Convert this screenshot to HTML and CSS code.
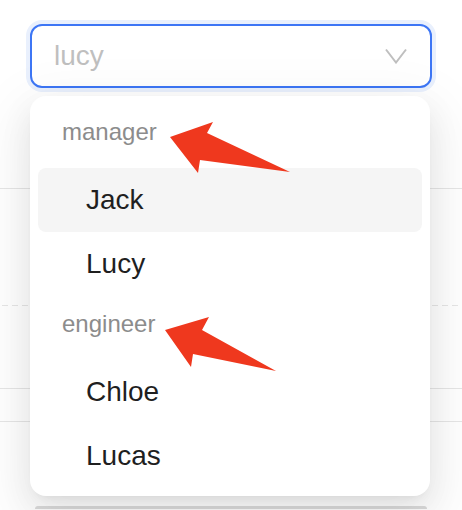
FILE: index.html
```html
<!DOCTYPE html>
<html>
<head>
    <title>Select with option groups</title>
    <link rel="stylesheet" href="styles.css">
</head>
<body>
    <div class="page">
        <div class="select">
            <span class="placeholder">lucy</span>
            <svg class="chevron" width="22" height="16" viewBox="0 0 22 16">
                <polyline points="1,1.5 11,14.5 21,1.5" fill="none" stroke="#bfbfbf" stroke-width="2" stroke-linejoin="miter"/>
            </svg>
        </div>

        <!-- content underneath the popup -->
        <div class="rows">
            <div class="row row-1"></div>
            <div class="row row-2"></div>
            <div class="row row-3"></div>
            <div class="row row-4"></div>
        </div>
        <div class="bottom-block"></div>

        <div class="dropdown">
            <div class="group-title">manager</div>
            <div class="option active">Jack</div>
            <div class="option">Lucy</div>
            <div class="group-title">engineer</div>
            <div class="option">Chloe</div>
            <div class="option">Lucas</div>
        </div>

        <!-- annotation arrows -->
        <svg class="arrows" width="462" height="510" viewBox="0 0 462 510">
            <polygon points="170,137 213,122 207,133 290,172 200,160 198,173" fill="#ef381e"/>
            <polygon points="165,330 209,317 202,330 276,371 193,354 191,367" fill="#ef381e"/>
        </svg>
    </div>
</body>
</html>
```

FILE: styles.css
```css
html, body { margin: 0; padding: 0; background: #fff; }
body { font-family: "Liberation Sans", Arial, sans-serif; width: 462px; height: 510px; overflow: hidden; }
.page { position: relative; width: 462px; height: 510px; box-sizing: border-box; padding-top: 24px; overflow: hidden; }

.select { margin: 0 30px; height: 64px; box-sizing: border-box; border: 2px solid #3d76f5; border-radius: 12px; box-shadow: 0 0 0 4px #e9f0fd; display: flex; align-items: center; justify-content: space-between; padding: 0 22px 0 22px; background: #fff; }
.placeholder { font-size: 28px; color: #bfbfbf; }
.chevron { display: block; margin-right: 1px; }

.row { border-bottom: 1px solid #e6e6e6; }
.row-1 { height: 100px; }
.row-2 { height: 117px; border-bottom: none; background: repeating-linear-gradient(to right, transparent 0 2px, #e6e6e6 2px 8px, transparent 8px 10px) bottom / 100% 1px no-repeat; }
.row-3 { height: 82px; }
.row-4 { height: 32px; }
.bottom-block { margin: 84px 35px 0; height: 3px; background: #dcdcdc; border-radius: 8px 8px 0 0; }

.dropdown { position: absolute; top: 96px; left: 30px; width: 400px; box-sizing: border-box; padding: 8px; background: #fff; border-radius: 16px; box-shadow: 0 12px 32px 0 rgba(0,0,0,0.08), 0 6px 12px -8px rgba(0,0,0,0.12), 0 18px 56px 16px rgba(0,0,0,0.05); }
.group-title { height: 64px; box-sizing: border-box; padding: 10px 24px 0; font-size: 24px; line-height: 36px; color: #8c8c8c; }
.option { height: 64px; display: flex; align-items: center; padding-left: 48px; font-size: 28px; color: #1f1f1f; border-radius: 8px; }
.option.active { background: #f5f5f5; }

.arrows { position: absolute; top: 0; left: 0; pointer-events: none; }
```
